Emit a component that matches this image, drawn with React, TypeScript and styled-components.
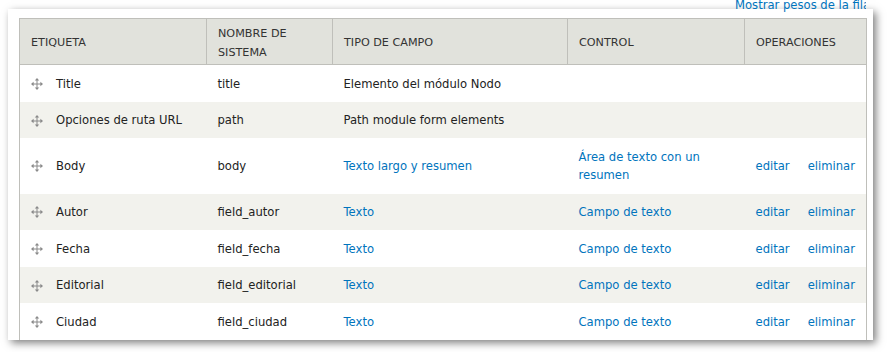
import React from "react";
import styled, { createGlobalStyle } from "styled-components";

const Global = createGlobalStyle`
  html, body { margin: 0; padding: 0; background: #fff; }
  body { font-family: "DejaVu Sans", Verdana, sans-serif; }
`;

const Page = styled.div`
  width: 887px;
  height: 352px;
  box-sizing: border-box;
  padding: 0 14px 0 8px;
  overflow: hidden;
`;

const LinkRow = styled.div`
  height: 9px;
  display: flex;
  justify-content: flex-end;
  padding-right: 7px;
`;

const TopLink = styled.a`
  display: block;
  width: 131px;
  overflow: hidden;
  white-space: nowrap;
  font-size: 11.6px;
  line-height: 12px;
  margin-top: -1px;
  height: 14px;
  color: #0074bd;
  text-decoration: none;
`;

const Panel = styled.div`
  background: #fff;
  height: 331px;
  box-sizing: border-box;
  padding: 9px 7px 0 11px;
  overflow: hidden;
  box-shadow: 3px 3px 8px rgba(0, 0, 0, 0.5);
`;

const Table = styled.table`
  width: 847px;
  border-collapse: collapse;
  table-layout: fixed;
  border: 1px solid #bfbfba;
  font-size: 11.6px;
  line-height: 18.6px;
  color: #222;
`;

const Col = styled.col<{ $w: number }>`
  width: ${(p) => p.$w}px;
`;

const Th = styled.th`
  box-sizing: border-box;
  background: #e1e2dc;
  border: 1px solid #bfbfba;
  padding: 6px 11px 2px;
  text-align: left;
  font-weight: normal;
  font-size: 11.2px;
  text-transform: uppercase;
  color: #333;
  vertical-align: middle;
`;

const Tr = styled.tr<{ $alt?: boolean }>`
  background: ${(p) => (p.$alt ? "#f2f2ed" : "#fff")};
`;

const Td = styled.td`
  box-sizing: border-box;
  padding: 9.5px 11px 8.5px;
  vertical-align: middle;
`;

const LabelWrap = styled.div`
  display: flex;
  align-items: center;
  gap: 13px;
`;

const Handle = styled.svg`
  width: 12px;
  height: 12px;
  flex: none;
`;

const Link = styled.a`
  color: #0074bd;
  text-decoration: none;
`;

const Ops = styled.div`
  display: flex;
  gap: 18px;
  white-space: nowrap;
`;

const DragIcon = () => (
  <Handle viewBox="0 0 12 12">
    <g stroke="#8a8a8a" strokeWidth="1" fill="none">
      <line x1="6" y1="2" x2="6" y2="10" />
      <line x1="2" y1="6" x2="10" y2="6" />
    </g>
    <g fill="#8a8a8a">
      <polygon points="6,0 3.8,2.6 8.2,2.6" />
      <polygon points="6,12 3.8,9.4 8.2,9.4" />
      <polygon points="0,6 2.6,3.8 2.6,8.2" />
      <polygon points="12,6 9.4,3.8 9.4,8.2" />
    </g>
  </Handle>
);

type Row = {
  label: string;
  machine: string;
  type: string;
  control?: string;
  linked: boolean;
};

const rows: Row[] = [
  { label: "Title", machine: "title", type: "Elemento del módulo Nodo", linked: false },
  { label: "Opciones de ruta URL", machine: "path", type: "Path module form elements", linked: false },
  { label: "Body", machine: "body", type: "Texto largo y resumen", control: "Área de texto con un resumen", linked: true },
  { label: "Autor", machine: "field_autor", type: "Texto", control: "Campo de texto", linked: true },
  { label: "Fecha", machine: "field_fecha", type: "Texto", control: "Campo de texto", linked: true },
  { label: "Editorial", machine: "field_editorial", type: "Texto", control: "Campo de texto", linked: true },
  { label: "Ciudad", machine: "field_ciudad", type: "Texto", control: "Campo de texto", linked: true },
];

export default function App() {
  return (
    <>
      <Global />
      <Page>
        <LinkRow>
          <TopLink href="#">Mostrar pesos de la fila</TopLink>
        </LinkRow>
        <Panel>
          <Table>
            <colgroup>
              <Col $w={187} />
              <Col $w={126} />
              <Col $w={235} />
              <Col $w={177} />
              <Col $w={122} />
            </colgroup>
            <thead>
              <tr>
                <Th>Etiqueta</Th>
                <Th>Nombre de sistema</Th>
                <Th>Tipo de campo</Th>
                <Th>Control</Th>
                <Th>Operaciones</Th>
              </tr>
            </thead>
            <tbody>
              {rows.map((r, i) => (
                <Tr key={r.machine} $alt={i % 2 === 1}>
                  <Td>
                    <LabelWrap>
                      <DragIcon />
                      <span>{r.label}</span>
                    </LabelWrap>
                  </Td>
                  <Td>{r.machine}</Td>
                  <Td>{r.linked ? <Link href="#">{r.type}</Link> : r.type}</Td>
                  <Td>{r.control ? <Link href="#">{r.control}</Link> : null}</Td>
                  <Td>
                    {r.linked ? (
                      <Ops>
                        <Link href="#">editar</Link>
                        <Link href="#">eliminar</Link>
                      </Ops>
                    ) : null}
                  </Td>
                </Tr>
              ))}
            </tbody>
          </Table>
        </Panel>
      </Page>
    </>
  );
}
